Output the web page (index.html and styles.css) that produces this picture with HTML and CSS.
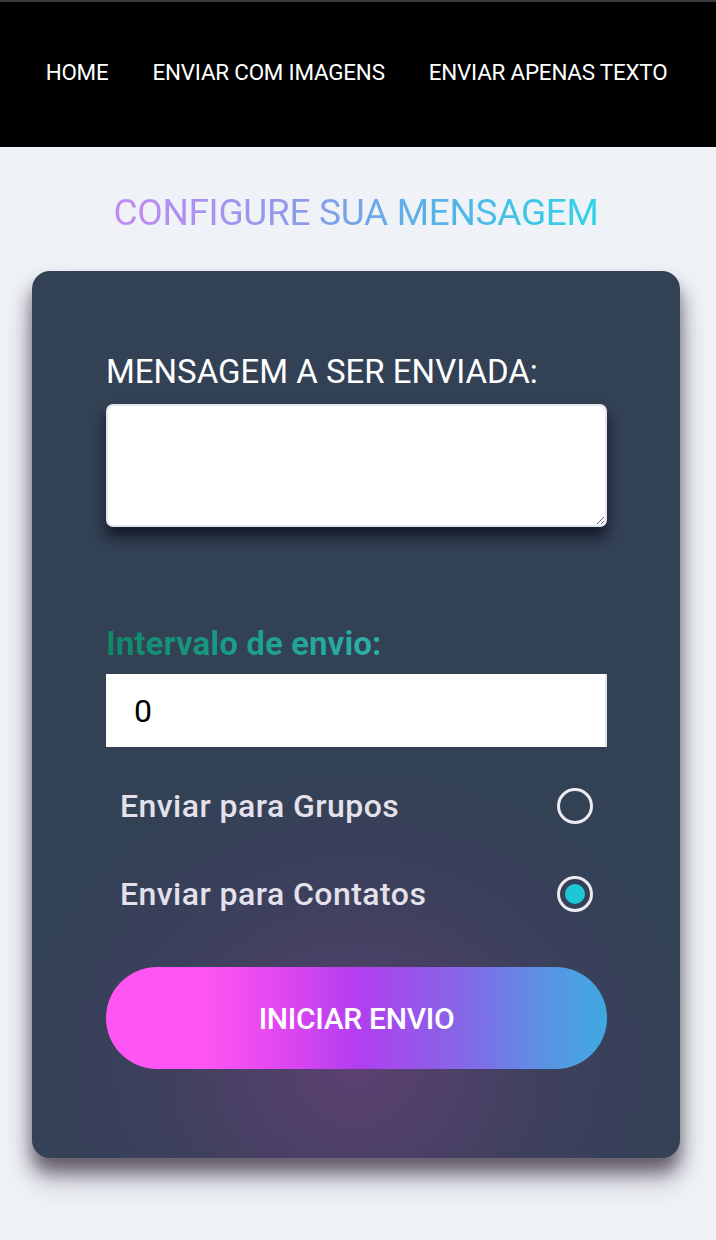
FILE: index.html
```html
<!DOCTYPE html>
<html lang="pt">
<head>
<meta charset="utf-8">
<title>Configure sua mensagem</title>
<link rel="stylesheet" href="styles.css">
</head>
<body>
<header class="topbar">
  <nav class="nav">
    <a class="nav-link" href="#">HOME</a>
    <a class="nav-link" href="#">ENVIAR COM IMAGENS</a>
    <a class="nav-link" href="#">ENVIAR APENAS TEXTO</a>
  </nav>
</header>
<main class="page">
  <h1 class="title">CONFIGURE SUA MENSAGEM</h1>
  <section class="card">
    <label class="field-label" for="msg">MENSAGEM A SER ENVIADA:</label>
    <textarea id="msg" class="message"></textarea>
    <label class="interval-label" for="intv">Intervalo de envio:</label>
    <input id="intv" class="interval" type="text" value="0">
    <div class="option first">
      <span class="option-text">Enviar para Grupos</span>
      <span class="radio"></span>
    </div>
    <div class="option">
      <span class="option-text">Enviar para Contatos</span>
      <span class="radio checked"></span>
    </div>
    <button class="send" type="button">INICIAR ENVIO</button>
  </section>
</main>
</body>
</html>
```
FILE: styles.css
```css
* { box-sizing: border-box; }
html, body { margin: 0; padding: 0; }
body {
  background: #eff2f7;
  font-family: Roboto, "Liberation Sans", sans-serif;
  width: 716px;
  min-height: 1240px;
}
.topbar {
  background: #000;
  border-top: 2px solid #3c3b40;
  height: 147px;
  display: flex;
  align-items: center;
  justify-content: center;
}
.nav {
  display: flex;
  gap: 44px;
  padding-right: 3px;
  margin-top: -6px;
}
.nav-link {
  color: #fff;
  text-decoration: none;
  font-size: 22.4px;
  letter-spacing: -0.2px;
}
.page {
  display: flex;
  flex-direction: column;
  align-items: center;
  padding: 0 4px 80px 0;
}
.title {
  margin: 44px 0 0;
  font-weight: 400;
  font-size: 37px;
  line-height: 44px;
  letter-spacing: -0.3px;
  background: linear-gradient(90deg, #c48af2 0%, #8a9ceb 40%, #58b1e6 65%, #2ed4e8 100%);
  -webkit-background-clip: text;
  background-clip: text;
  color: transparent;
}
.card {
  margin-top: 36px;
  width: 648px;
  height: 887px;
  border-radius: 18px;
  padding: 82px 73px 0 74px;
  display: flex;
  flex-direction: column;
  background:
    radial-gradient(ellipse 340px 300px at 50% 90%, rgba(110, 65, 125, 0.7), rgba(90, 60, 115, 0.25) 60%, rgba(51, 65, 85, 0) 100%),
    #334155;
  box-shadow: 0 14px 18px rgba(20, 10, 25, 0.55), 0 22px 30px rgba(60, 40, 70, 0.25);
}
.field-label {
  color: #fff;
  font-size: 33px;
  line-height: 38px;
  letter-spacing: 0;
}
.message {
  margin-top: 13px;
  height: 123px;
  width: 100%;
  border: 2px solid #e3e5ee;
  border-radius: 7px;
  background: #fff;
  box-shadow: 0 10px 14px rgba(5, 10, 20, 0.7);
  resize: vertical;
  font: inherit;
}
.interval-label {
  margin-top: 98px;
  font-weight: 700;
  font-size: 33px;
  line-height: 38px;
  letter-spacing: 0.1px;
  background: linear-gradient(90deg, #0f8766 0%, #1b9e8c 50%, #2cb0aa 100%);
  -webkit-background-clip: text;
  background-clip: text;
  color: transparent;
  align-self: flex-start;
}
.interval {
  margin-top: 11px;
  height: 73px;
  width: 100%;
  border: none;
  border-right: 2px solid #dfe3ea;
  border-radius: 0;
  background: #fff;
  font-family: inherit;
  font-size: 32px;
  color: #000;
  padding: 0 0 0 28px;
  outline: none;
}
.option {
  display: flex;
  align-items: center;
  justify-content: space-between;
  padding: 0 14px;
  height: 88px;
}
.option.first { margin-top: 15px; }
.option-text {
  color: #e4e1ec;
  font-size: 32px;
  font-weight: 500;
  letter-spacing: 0.45px;
}
.radio {
  width: 36px;
  height: 36px;
  border-radius: 50%;
  border: 3px solid #eceaf2;
  display: flex;
  align-items: center;
  justify-content: center;
}
.radio.checked::after {
  content: "";
  width: 20px;
  height: 20px;
  border-radius: 50%;
  background: #1cc8d6;
}
.send {
  margin-top: 29px;
  height: 102px;
  width: 100%;
  border: none;
  border-radius: 51px;
  color: #fff;
  font-family: inherit;
  font-size: 30px;
  font-weight: 500;
  letter-spacing: -0.3px;
  background: linear-gradient(90deg, #ff55f2 0%, #ff55f2 20%, #e047f0 35%, #b23ef0 50%, #9855ea 62%, #7a72e6 76%, #5a94e3 88%, #3ea9e0 100%);
}
```
